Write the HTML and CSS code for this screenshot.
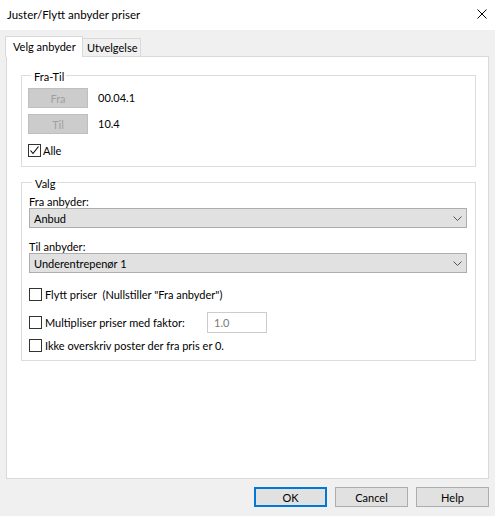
FILE: index.html
```html
<!DOCTYPE html>
<html>
<head>
<meta charset="utf-8">
<link rel="stylesheet" href="styles.css">
</head>
<body>
<div class="window">
  <div class="titlebar">
    <span class="title">Juster/Flytt anbyder priser</span>
    <svg class="close" width="10" height="10" viewBox="0 0 10 10"><path d="M0.5 0.5 L9.5 9.5 M9.5 0.5 L0.5 9.5" stroke="#000" stroke-width="1" fill="none"/></svg>
  </div>
  <div class="client">
    <div class="tabs">
      <div class="tab active">Velg anbyder</div>
      <div class="tab">Utvelgelse</div>
    </div>
    <div class="panel">
      <fieldset class="group group-fratil">
        <legend>Fra-Til</legend>
        <div class="range-row">
          <button class="btn-disabled">Fra</button>
          <span class="range-val">00.04.1</span>
        </div>
        <div class="range-row">
          <button class="btn-disabled">Til</button>
          <span class="range-val">10.4</span>
        </div>
        <div class="check-row alle">
          <span class="checkbox checked"><svg width="11" height="11" viewBox="0 0 11 11"><path d="M1.5 5.5 L4 8.5 L9.5 1.5" stroke="#000" stroke-width="1.1" fill="none"/></svg></span>
          <span class="check-label">Alle</span>
        </div>
      </fieldset>
      <fieldset class="group group-valg">
        <legend>Valg</legend>
        <div class="field-label">Fra anbyder:</div>
        <div class="combo">
          <span>Anbud</span>
          <svg class="chev" width="9" height="5" viewBox="0 0 9 5"><path d="M0.5 0.5 L4.5 4.5 L8.5 0.5" stroke="#555" stroke-width="1" fill="none"/></svg>
        </div>
        <div class="field-label second">Til anbyder:</div>
        <div class="combo">
          <span>Underentrepenør 1</span>
          <svg class="chev" width="9" height="5" viewBox="0 0 9 5"><path d="M0.5 0.5 L4.5 4.5 L8.5 0.5" stroke="#555" stroke-width="1" fill="none"/></svg>
        </div>
        <div class="check-row opt1">
          <span class="checkbox"></span>
          <span class="check-label">Flytt priser&nbsp; (Nullstiller "Fra anbyder")</span>
        </div>
        <div class="check-row opt2">
          <span class="checkbox"></span>
          <span class="check-label mult">Multipliser priser med faktor:</span>
          <div class="factor">1.0</div>
        </div>
        <div class="check-row opt3">
          <span class="checkbox"></span>
          <span class="check-label">Ikke overskriv poster der fra pris er 0.</span>
        </div>
      </fieldset>
    </div>
    <div class="footer">
      <button class="btn default">OK</button>
      <button class="btn">Cancel</button>
      <button class="btn">Help</button>
    </div>
  </div>
</div>
</body>
</html>
```

FILE: styles.css
```css
* { box-sizing: border-box; }
html, body {
  margin: 0;
  padding: 0;
  width: 495px;
  height: 516px;
  overflow: hidden;
  background: #f0f0f0;
  font-family: Lato, "Noto Sans", sans-serif;
  font-size: 11px;
  color: #000;
}
.window {
  width: 495px;
  height: 516px;
  display: flex;
  flex-direction: column;
}
.titlebar {
  height: 30px;
  background: #fff;
  display: flex;
  align-items: center;
  justify-content: space-between;
  padding: 0 8px 1px 7px;
  font-size: 11.5px;
}
.close { margin-top: -1px; }
.client {
  flex: 1;
  background: #f0f0f0;
  padding: 6px 6px 0 6px;
}
.tabs {
  display: flex;
  align-items: flex-end;
  height: 20px;
  position: relative;
  z-index: 1;
}
.tab {
  height: 18px;
  border: 1px solid #d9d9d9;
  border-bottom: none;
  padding: 0 0 0 4px;
  line-height: 17px;
  background: #f0f0f0;
  width: 59px;
  white-space: nowrap;
}
.tab.active {
  height: 21px;
  width: 78px;
  background: #fff;
  margin-left: -1px;
  margin-bottom: -1px;
  margin-right: -1px;
  padding: 1px 0 0 7px;
  line-height: 17px;
  border-right: 1px solid #d9d9d9;
}
.panel {
  height: 423px;
  background: #fff;
  border: 1px solid #d9d9d9;
  padding: 10px 12px 0 14px;
}
.group {
  margin: 0;
  border: 1px solid #dcdcdc;
  padding: 0;
  min-width: 0;
}
.group legend {
  padding: 4px 2px 0 3px;
  margin-left: 3px;
  line-height: 12px;
}
.group-fratil {
  padding: 5px 6px 8px 6px;
}
.range-row {
  display: flex;
  align-items: center;
  height: 20px;
  margin-bottom: 6px;
}
.btn-disabled {
  width: 60px;
  height: 20px;
  background: #cccccc;
  border: 1px solid #bfbfbf;
  color: #a0a0a0;
  font: inherit;
  padding: 0;
}
.range-val {
  margin-left: 10px;
  margin-top: -1px;
}
.check-row {
  display: flex;
  align-items: center;
  height: 16px;
}
.alle { margin-top: 8px; }
.checkbox {
  width: 13px;
  height: 13px;
  border: 1px solid #333;
  background: #fff;
  display: flex;
  align-items: center;
  justify-content: center;
  flex: none;
}
.check-label { margin-left: 3px; }
.alle .check-label { margin-left: 2px; }
.group-valg {
  margin-top: 7px;
  padding: 5px 8px 7px 7px;
}
.field-label {
  line-height: 14px;
  height: 14px;
}
.field-label.second { margin-top: 12px; }
.combo {
  margin-top: -1px;
  height: 20px;
  background: #e1e1e1;
  border: 1px solid #adadad;
  display: flex;
  align-items: center;
  justify-content: space-between;
  padding: 0 4px 0 4px;
}
.opt1 { margin-top: 13px; }
.opt2 { margin-top: 9px; height: 22px; }
.opt3 { margin-top: 4px; }
.mult { width: 162px; }
.factor {
  width: 60px;
  height: 21px;
  border: 1px solid #cccccc;
  background: #fff;
  color: #7a7a7a;
  padding: 2px 0 0 6px;
  line-height: 15px;
}
.footer {
  display: flex;
  justify-content: flex-end;
  gap: 8px;
  padding-top: 8px;
}
.btn {
  width: 73px;
  height: 20px;
  background: #e1e1e1;
  border: 1px solid #adadad;
  font: inherit;
  color: #000;
  padding: 0;
}
.btn.default {
  border: 2px solid #0078d7;
}
```
